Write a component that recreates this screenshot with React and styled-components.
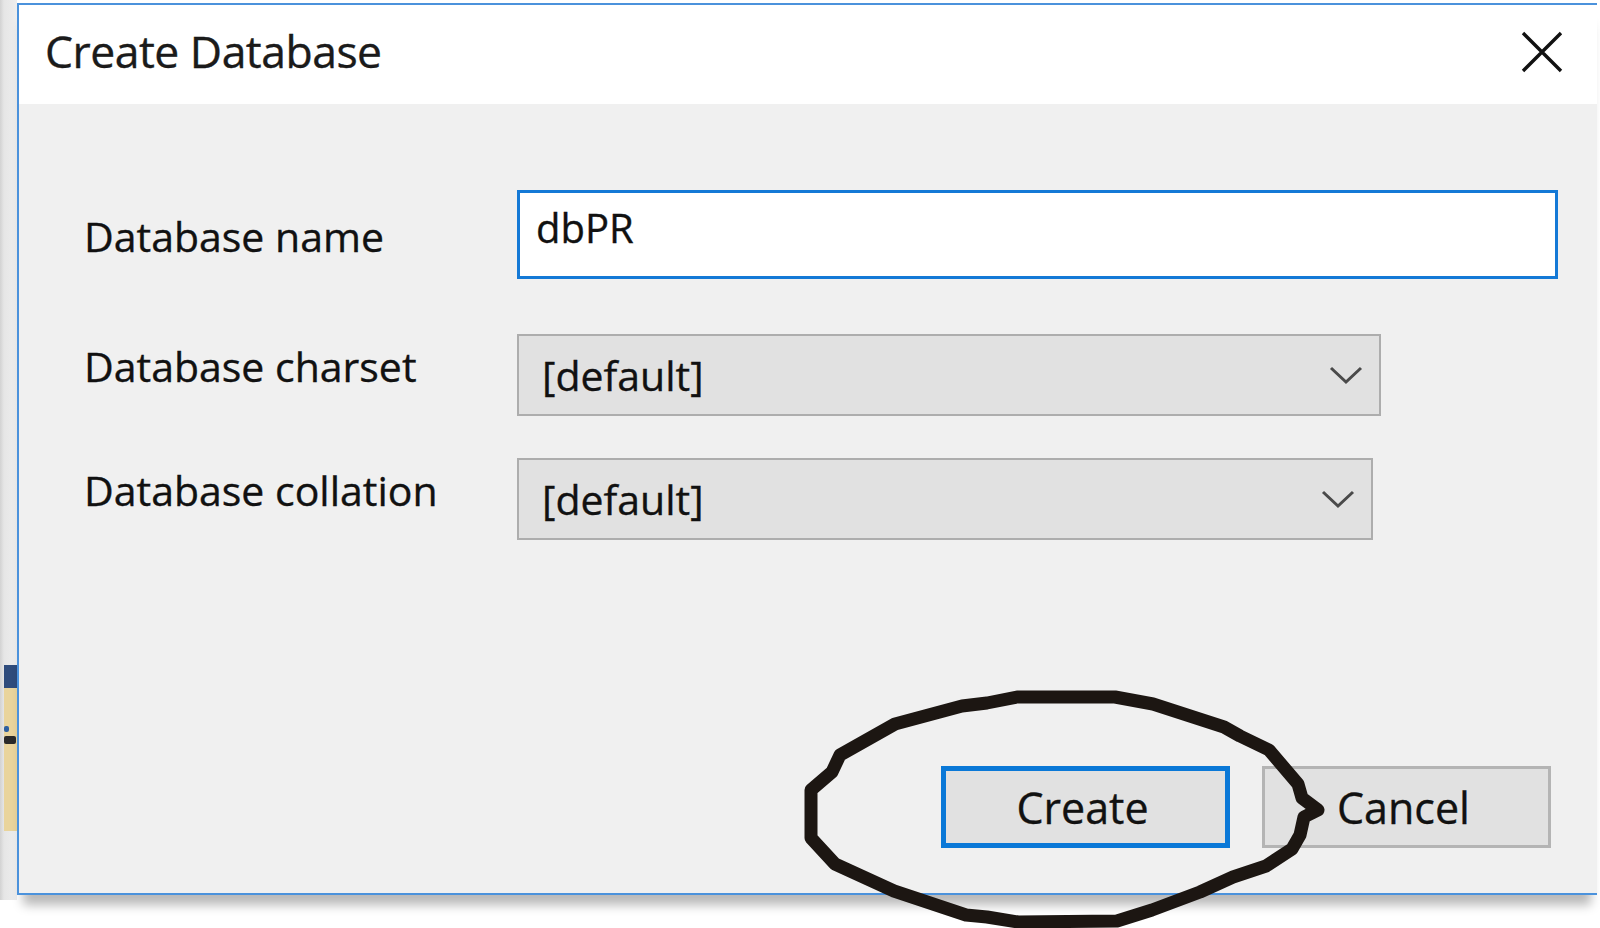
import React from 'react';
import styled, { createGlobalStyle } from 'styled-components';

const GlobalStyle = createGlobalStyle`
  html, body {
    margin: 0;
    padding: 0;
    background: #fff;
  }
  body {
    font-family: "Open Sans", "Noto Sans", sans-serif;
    color: #111;
    -webkit-text-stroke: 0.35px #111;
  }
`;

const Screen = styled.div`
  position: relative;
  display: flex;
  width: 1600px;
  height: 928px;
  overflow: hidden;
  background: #fff;
`;

// the window behind the dialog, only a sliver of it shows on the left
const BehindStrip = styled.div`
  flex: 0 0 17px;
  box-sizing: border-box;
  height: 900px;
  display: flex;
  flex-direction: column;
  padding: 665px 0 0 4px;
  background: linear-gradient(to right, #d2d2d2 0, #e6e6e6 4px, #eeeeee 100%);
`;

const BehindBlock = styled.div`
  height: ${p => p.$h}px;
  background: ${p => p.$bg};
  display: flex;
  flex-direction: column;
  gap: 4px;
  padding-top: ${p => p.$pad || 0}px;
`;

const Dot = styled.div`
  width: ${p => p.$w}px;
  height: ${p => p.$h}px;
  background: ${p => p.$bg};
  border-radius: 2px;
`;

const DialogColumn = styled.div`
  flex: 0 0 1580px;
  padding-top: 3px;
`;

const Dialog = styled.div`
  width: 1580px;
  height: 892px;
  box-sizing: border-box;
  border: 2px solid #4b92dc;
  border-right: none;
  display: flex;
  flex-direction: column;
  box-shadow: 0 16px 10px -6px rgba(0, 0, 0, 0.28);
`;

const TitleBar = styled.div`
  height: 99px;
  box-sizing: border-box;
  background: #fff;
  display: flex;
  align-items: center;
  justify-content: space-between;
  padding: 0 34px 6px 26px;
`;

const Title = styled.div`
  font-size: 44.5px;
  line-height: 1;
  letter-spacing: -0.5px;
  color: #1b1b1b;
`;

const CloseButton = styled.div`
  width: 42px;
  height: 42px;
  display: flex;
  align-items: center;
  justify-content: center;
`;

const Body = styled.div`
  flex: 1;
  background: #f0f0f0;
  display: flex;
  flex-direction: column;
  padding: 86px 46px 45px 65px;
`;

const Form = styled.div`
  display: flex;
  flex-direction: column;
`;

const Row = styled.div`
  display: flex;
  align-items: flex-start;
  margin-top: ${p => p.$gap || 0}px;
`;

const Label = styled.div`
  flex: 0 0 433px;
  font-size: 41px;
  line-height: 1;
  padding-top: ${p => p.$top}px;
  color: #111;
`;

const TextInput = styled.input`
  flex: 0 0 1041px;
  width: 1041px;
  height: 89px;
  box-sizing: border-box;
  border: 3px solid #1479d6;
  background: #fff;
  font-family: "Open Sans", "Noto Sans", sans-serif;
  font-size: 40px;
  color: #111;
  -webkit-text-stroke: 0.35px #111;
  padding: 0 0 14px 16px;
  outline: none;
`;

const Select = styled.div`
  flex: 0 0 ${p => p.$w}px;
  height: 82px;
  box-sizing: border-box;
  border: 2px solid #adadad;
  background: #e1e1e1;
  display: flex;
  align-items: center;
  justify-content: space-between;
  padding: 0 16px 0 23px;
  font-size: 41px;
  line-height: 1;
  color: #111;
`;

const Footer = styled.div`
  margin-top: auto;
  display: flex;
  justify-content: flex-end;
  gap: 32px;
`;

const Button = styled.div`
  width: 289px;
  height: 82px;
  box-sizing: border-box;
  background: #e1e1e1;
  border: ${p => (p.$primary ? '5px solid #0a78d7' : '3px solid #b4b4b4')};
  display: flex;
  align-items: center;
  justify-content: center;
  padding-right: 6px;
  font-size: 43px;
  line-height: 1;
  color: #111;
`;

const Annotation = styled.svg`
  position: absolute;
  left: 0;
  top: 0;
  pointer-events: none;
`;

const Chevron = () => (
  <svg width="34" height="20" viewBox="0 0 34 20">
    <polyline points="2,3 17,17 32,3" fill="none" stroke="#4a4a4a" strokeWidth="3" />
  </svg>
);

const circlePoints = [
  [811, 790], [832, 772], [840, 755], [895, 724], [962, 706], [987, 703],
  [1017, 697], [1115, 697], [1153, 704], [1224, 727], [1240, 736], [1269, 750],
  [1298, 784], [1302, 798], [1318, 810], [1304, 817], [1300, 835], [1292, 849],
  [1266, 866], [1233, 877], [1200, 892], [1152, 910], [1117, 921], [1018, 922],
  [987, 917], [966, 915], [942, 907], [894, 891], [835, 864], [811, 838],
].map(p => p.join(',')).join(' ');

const fields = [
  { label: 'Database name', top: 26, gap: 0 },
  { label: 'Database charset', top: 12, gap: 55, width: 864 },
  { label: 'Database collation', top: 12, gap: 42, width: 856 },
];

export default function App() {
  return (
    <>
      <GlobalStyle />
      <Screen>
        <BehindStrip>
          <BehindBlock $h={23} $bg="#2f4c7c" />
          <BehindBlock $h={105} $bg="#e9d49c" $pad={38}>
            <Dot $w={5} $h={6} $bg="#2e5fa0" />
            <Dot $w={12} $h={8} $bg="#2a2a2a" />
          </BehindBlock>
        </BehindStrip>
        <DialogColumn>
          <Dialog>
            <TitleBar>
              <Title>Create Database</Title>
              <CloseButton>
                <svg width="42" height="42" viewBox="0 0 42 42">
                  <path d="M2 2 L40 40 M40 2 L2 40" stroke="#111" strokeWidth="3.4" />
                </svg>
              </CloseButton>
            </TitleBar>
            <Body>
              <Form>
                {fields.map(f => (
                  <Row key={f.label} $gap={f.gap}>
                    <Label $top={f.top}>{f.label}</Label>
                    {f.width ? (
                      <Select $w={f.width}>
                        <span>[default]</span>
                        <Chevron />
                      </Select>
                    ) : (
                      <TextInput defaultValue="dbPR" />
                    )}
                  </Row>
                ))}
              </Form>
              <Footer>
                <Button $primary>Create</Button>
                <Button>Cancel</Button>
              </Footer>
            </Body>
          </Dialog>
        </DialogColumn>
        <Annotation width="1600" height="928" viewBox="0 0 1600 928">
          <polygon
            points={circlePoints}
            fill="none"
            stroke="#1c1612"
            strokeWidth="13"
            strokeLinejoin="round"
          />
        </Annotation>
      </Screen>
    </>
  );
}
